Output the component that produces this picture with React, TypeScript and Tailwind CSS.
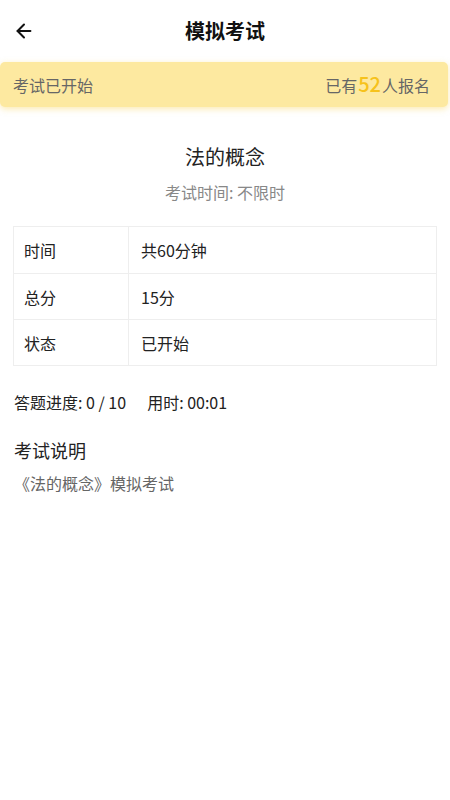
import { ArrowLeft } from "lucide-react";

const font = "font-['Noto_Sans_CJK_SC','Noto_Sans',sans-serif]";

const rows = [
  { label: "时间", value: "共60分钟" },
  { label: "总分", value: "15分" },
  { label: "状态", value: "已开始" },
];

export default function App() {
  return (
    <div className={`min-h-[800px] w-[450px] bg-white ${font}`}>
      {/* Header */}
      <div className="relative flex h-[62px] items-center justify-center">
        <button className="absolute left-[13px] top-[20px] text-[#111]">
          <ArrowLeft className="h-[22px] w-[22px]" strokeWidth={2.2} />
        </button>
        <h1 className="text-[20px] font-bold text-[#111]">模拟考试</h1>
      </div>

      {/* Status banner */}
      <div className="mr-[2px] flex h-[45px] items-center justify-between rounded-[5px] bg-[#fde9a0] pl-[13px] pr-[18px] shadow-[0_2px_6px_rgba(250,215,100,0.5)]">
        <span className="text-[16px] text-[#666]">考试已开始</span>
        <span className="flex items-baseline text-[16px] text-[#666]">
          已有
          <span className="px-[1px] text-[20px] font-medium leading-none text-[#f6c21c]">52</span>
          人报名
        </span>
      </div>

      {/* Title */}
      <div className="mt-[36px] flex flex-col items-center">
        <h2 className="text-[20px] leading-[28px] text-[#222]">法的概念</h2>
        <p className="mt-[10px] text-[16px] leading-[22px] text-[#888]">考试时间: 不限时</p>
      </div>

      {/* Info table */}
      <div className="mx-[13px] mt-[23px] border border-[#eeeeee]">
        {rows.map((row, i) => (
          <div
            key={row.label}
            className={`flex h-[46px] items-center text-[16px] text-[#222] ${i > 0 ? "border-t border-[#eeeeee]" : ""}`}
          >
            <div className="flex h-full w-[115px] items-center border-r border-[#eeeeee] pl-[10px]">{row.label}</div>
            <div className="pl-[12px]">{row.value}</div>
          </div>
        ))}
      </div>

      {/* Progress */}
      <div className="mt-[25px] px-[14px] text-[16px] leading-[22px] text-[#222]">
        答题进度: 0 / 10<span className="ml-[21px]">用时: 00:01</span>
      </div>

      {/* Description */}
      <div className="mt-[24px] px-[14px]">
        <h3 className="text-[18px] leading-[26px] text-[#222]">考试说明</h3>
        <p className="mt-[9px] text-[16px] leading-[22px] text-[#666]">《法的概念》模拟考试</p>
      </div>
    </div>
  );
}
